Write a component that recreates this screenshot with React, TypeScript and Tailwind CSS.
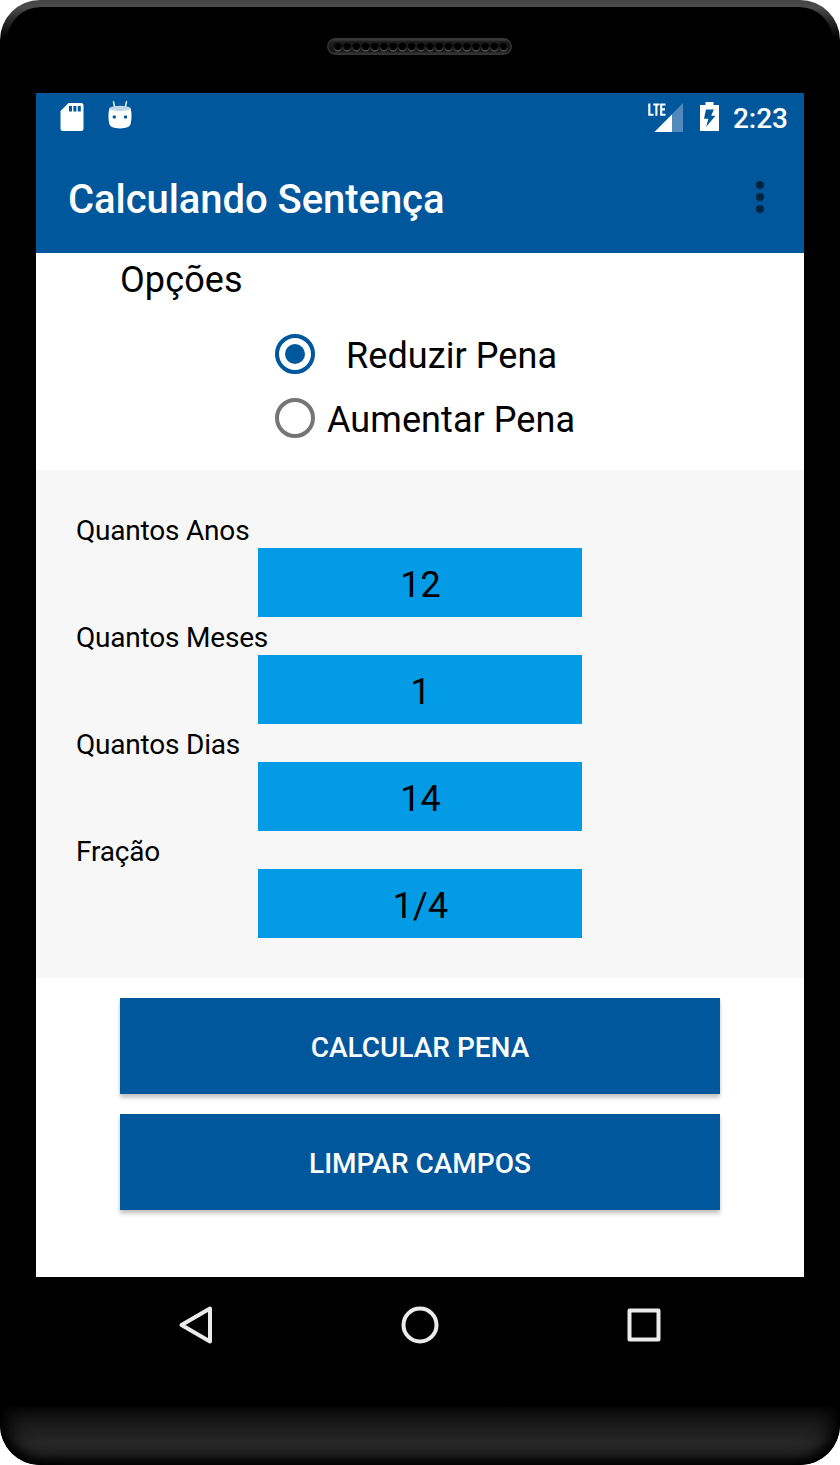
import React, { useState } from "react";

const fields = [
  { label: "Quantos Anos", value: "12" },
  { label: "Quantos Meses", value: "1" },
  { label: "Quantos Dias", value: "14" },
  { label: "Fração", value: "1/4" },
];

const speakerHoles = Array.from({ length: 19 }, (_, i) => 11 + i * 9.2);

function Speaker() {
  return (
    <svg width="185" height="17" viewBox="0 0 185 17" className="block">
      <defs>
        <linearGradient id="slot" x1="0" y1="0" x2="0" y2="1">
          <stop offset="0" stopColor="#4a4a4a" />
          <stop offset="0.2" stopColor="#1c1c1c" />
          <stop offset="0.8" stopColor="#161616" />
          <stop offset="1" stopColor="#3c3c3c" />
        </linearGradient>
        <linearGradient id="rim" x1="0" y1="0" x2="0" y2="1">
          <stop offset="0.35" stopColor="#000" />
          <stop offset="1" stopColor="#666" />
        </linearGradient>
      </defs>
      <rect x="0.75" y="0.75" width="183.5" height="15.5" rx="7.75" fill="url(#slot)" stroke="#343434" strokeWidth="1.5" />
      {speakerHoles.map((x) => (
        <circle key={x} cx={x} cy="9.2" r="3.7" fill="#000" stroke="url(#rim)" strokeWidth="1.2" />
      ))}
    </svg>
  );
}

function SdCardIcon() {
  return (
    <svg width="24" height="28" viewBox="0 0 24 28">
      <path
        fillRule="evenodd"
        fill="#fff"
        d="M8.5 0H21a2.5 2.5 0 0 1 2.5 2.5v23A2.5 2.5 0 0 1 21 28H3a2.5 2.5 0 0 1-2.5-2.5V8ZM9 3v5.5h3V3Zm4.4 0v5.5h3V3Zm4.4 0v5.5h3V3Z"
      />
    </svg>
  );
}

function RobotIcon() {
  return (
    <svg width="24" height="28" viewBox="0 0 24 28">
      <path d="M5.5 .8 6.700 6M18.500 .8 17.300 6" stroke="#fff" strokeWidth="1.4" strokeLinecap="round" />
      <path d="M1.600 6.800C5 8 19 8 22.400 6.800C23.900 11 23.900 18.500 22.500 23.300C21.500 26 18.500 27.400 12 27.400S2.500 26 1.500 23.300C.1 18.500.1 11 1.600 6.800Z" fill="#fff" />
      <ellipse cx="12" cy="7.400" rx="10.300" ry="2.700" fill="#bfd5e7" />
      <rect x="4.800" y="14.500" width="3" height="3" rx="0.800" fill="#00579c" />
      <rect x="16" y="14.500" width="3" height="3" rx="0.800" fill="#00579c" />
    </svg>
  );
}

function SignalIcon() {
  return (
    <svg width="36" height="30" viewBox="0 0 36 30">
      <path d="M35 0V29H6.500Z" fill="#5089ba" />
      <path d="M24 11.500V29H6.500Z" fill="#fff" />
      <path d="M1.300.5V11.700H5.500M5.300 1.500H11.500M8.400 1.500V12.700M17.500 1.500H13.200V11.700H17.500M13.200 6.400H17" fill="none" stroke="#fff" strokeWidth="2.100" />
    </svg>
  );
}

function BatteryIcon() {
  return (
    <svg width="19" height="29" viewBox="0 0 19 29">
      <path d="M5.500 0H13.500V3H19V29H0V3H5.500Z" fill="#fff" />
      <path d="M6 7.500H13.800L11.200 13.700H15.500L6 25L8.500 16.700H4Z" fill="#00579c" />
    </svg>
  );
}

function StatusBar() {
  return (
    <div className="flex h-12 items-start bg-[#00579c] pt-[9px] pl-6 pr-4 text-white">
      <div className="mt-px flex gap-6">
        <SdCardIcon />
        <div className="-mt-[2px]">
          <RobotIcon />
        </div>
      </div>
      <div className="ml-auto flex items-start">
        <div className="mt-px mr-4">
          <SignalIcon />
        </div>
        <BatteryIcon />
        <span className="ml-[14px] pt-px text-[28px] leading-8 font-medium">2:23</span>
      </div>
    </div>
  );
}

function AppBar() {
  return (
    <header className="flex h-28 items-center justify-between bg-[#00579c] pl-8 pr-10">
      <h1 className="pt-[5px] text-[40px] leading-[48px] font-medium tracking-[-0.06px] text-white">Calculando Sentença</h1>
      <button aria-label="Menu" className="flex flex-col gap-1">
        <span className="size-2 rounded-full bg-[#00253f]" />
        <span className="size-2 rounded-full bg-[#00253f]" />
        <span className="size-2 rounded-full bg-[#00253f]" />
      </button>
    </header>
  );
}

function RadioRow({ label, gap, checked, onSelect }: { label: string; gap: string; checked: boolean; onSelect: () => void }) {
  return (
    <div role="radio" aria-checked={checked} onClick={onSelect} className="flex h-16 items-center">
      <span className={"flex size-10 shrink-0 items-center justify-center rounded-full border-4 " + (checked ? "border-[#00579c]" : "border-[#757575]")}>
        {checked && <span className="size-5 rounded-full bg-[#00579c]" />}
      </span>
      <span className={"pt-[3px] text-[36px] leading-[42px] tracking-[0.07px] whitespace-nowrap " + gap}>{label}</span>
    </div>
  );
}

function ActionButton({ children }: { children: string }) {
  return (
    <button className="h-24 w-full bg-[#00579c] pt-[3px] text-[28px] leading-8 font-medium text-white shadow-[0_4px_4px_rgba(0,0,0,0.2),0_1px_3px_rgba(0,0,0,0.08)]">
      {children}
    </button>
  );
}

function NavBar() {
  return (
    <nav className="flex h-24 items-center justify-center gap-44">
      <svg width="48" height="48" viewBox="0 0 48 48" fill="none" stroke="#ebebeb" strokeWidth="4" strokeLinejoin="round">
        <path d="M38 7.500V40.500L9.500 24Z" />
      </svg>
      <svg width="48" height="48" viewBox="0 0 48 48" fill="none" stroke="#ebebeb" strokeWidth="4">
        <circle cx="24" cy="24" r="16.500" />
      </svg>
      <svg width="48" height="48" viewBox="0 0 48 48" fill="none" stroke="#ebebeb" strokeWidth="4" strokeLinejoin="round">
        <rect x="9.500" y="9.500" width="29" height="29" />
      </svg>
    </nav>
  );
}

export default function App() {
  const [mode, setMode] = useState("reduzir");
  return (
    <div className="h-[1465px] w-[840px] bg-white font-['Roboto',sans-serif] text-black">
      <div className="flex h-full flex-col overflow-hidden rounded-[40px] bg-black bg-[linear-gradient(180deg,#444_0px,#4c4c4c_7px,#303030_18px,#000_38px)]">
        <div className="mx-[7px] mt-[7px] flex h-[86px] shrink-0 justify-center rounded-t-[34px] bg-black pt-[31px] pr-[2px]">
          <Speaker />
        </div>
        <main className="mx-9 h-[1184px] shrink-0 bg-white">
          <StatusBar />
          <AppBar />
          <section className="h-[217px]">
            <h2 className="pt-[6px] pl-[84px] text-[36px] leading-[42px] tracking-[0.1px]">Opções</h2>
            <div role="radiogroup" className="mt-[21px] pl-[239px]">
              <RadioRow label="Reduzir Pena" gap="ml-[31px]" checked={mode === "reduzir"} onSelect={() => setMode("reduzir")} />
              <RadioRow label="Aumentar Pena" gap="ml-3" checked={mode === "aumentar"} onSelect={() => setMode("aumentar")} />
            </div>
          </section>
          <section className="h-[508px] bg-[#f7f7f7] px-10 pt-10">
            {fields.map((f) => (
              <div key={f.label}>
                <label className="block h-[38px] pt-[4px] text-[28px] leading-[34px] tracking-[-0.2px]">{f.label}</label>
                <div className="mx-auto h-[69px] w-[324px] bg-[#039be5] pt-[5px] pl-px text-center text-[36px] leading-[65px]">{f.value}</div>
              </div>
            ))}
          </section>
          <section className="flex flex-col gap-5 px-[84px] pt-5">
            <ActionButton>CALCULAR PENA</ActionButton>
            <ActionButton>LIMPAR CAMPOS</ActionButton>
          </section>
        </main>
        <div className="mx-9 h-[130px] shrink-0">
          <NavBar />
        </div>
        <div className="h-[58px] shrink-0 rounded-b-[40px] bg-[linear-gradient(180deg,#0d0d0d_0%,#262626_60%,#242424_100%)] shadow-[inset_14px_0_18px_-6px_#000,inset_-14px_0_18px_-6px_#000,inset_0_-8px_12px_-2px_#000]" />
      </div>
    </div>
  );
}
